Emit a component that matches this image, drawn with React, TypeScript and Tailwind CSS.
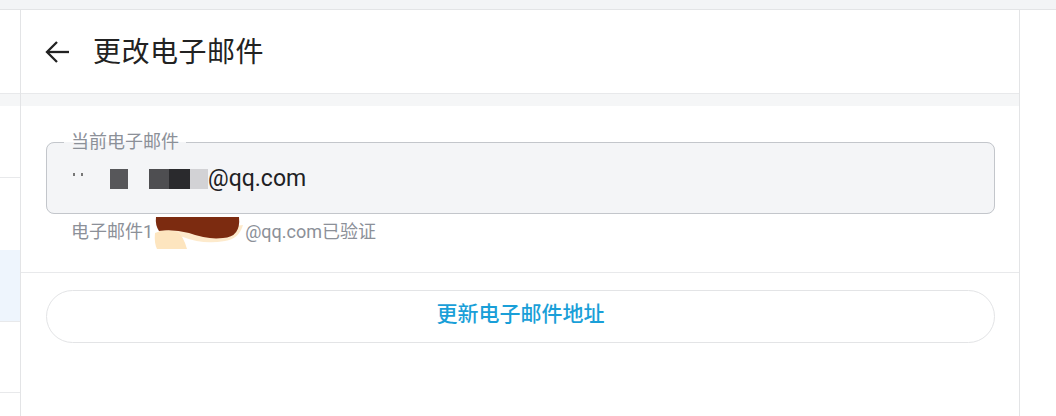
import React from "react";

const CJK = "font-['Roboto','Noto_Sans_CJK_SC',sans-serif]";

function LeftRail() {
  return (
    <div className="w-[21px] shrink-0 border-r border-[#e3e4e6] flex flex-col">
      <div className="h-[84px] border-b border-[#e8e9eb] bg-white" />
      <div className="h-[12px] bg-[#f5f6f7]" />
      <div className="h-[72px] border-b border-[#e8e9eb] bg-white" />
      <div className="h-[72px] bg-white" />
      <div className="h-[72px] border-b border-[#e8e9eb] bg-[#eef5fd]" />
      <div className="h-[71px] border-b border-[#e8e9eb] bg-white" />
      <div className="flex-1 bg-white" />
    </div>
  );
}

function Redaction() {
  return (
    <svg width="92" height="34" viewBox="0 0 92 34" className="shrink-0 -my-[8px]">
      <path d="M2 26 Q3 12 20 14 L40 16 L90 10 Q86 24 72 26 Q50 30 30 22 Q12 20 8 28 Z" fill="#fde8c6" opacity="0.9" />
      <path d="M3 2 L86 2 Q88 22 70 23 Q55 25 36 18 Q20 14 6 16 Q2 10 3 2 Z" fill="#7c2b10" />
      <path d="M2 18 Q10 14 24 17 Q30 20 34 34 L4 34 Q1 28 2 18 Z" fill="#fde5bf" />
    </svg>
  );
}

export default function App() {
  return (
    <div className={`w-[1056px] h-[416px] bg-white flex flex-col overflow-hidden ${CJK}`}>
      <div className="h-[10px] shrink-0 bg-[#f3f4f6] border-b border-[#e3e4e6]" />
      <div className="flex flex-1 min-h-0">
        <LeftRail />
        <div className="w-[999px] shrink-0 border-r border-[#e3e4e6] flex flex-col">
          <div className="h-[84px] shrink-0 border-b border-[#e8e9eb] flex items-center pl-[24px]">
            <svg width="24" height="24" viewBox="0 0 24 24" fill="none" stroke="#222" strokeWidth="2.3" strokeLinecap="square">
              <path d="M23 12H3" />
              <path d="M12 2L2 12l10 10" strokeLinecap="butt" />
            </svg>
            <span className="ml-[24px] text-[28px] tracking-[0.5px] leading-none text-[#222] font-['Noto_Sans_CJK_SC',sans-serif] pb-[3px]">
              更改电子邮件
            </span>
          </div>
          <div className="h-[12px] shrink-0 bg-[#f5f6f7]" />
          <div className="px-[25px] pr-[24px] pb-[30px] border-b border-[#e8e9eb]">
            <fieldset className="mt-[25px] border border-[#c3c6cb] rounded-[8px] bg-[#f4f5f7] px-[17px] m-0 min-w-0">
              <legend className="px-[7px] text-[18px] leading-[22px] text-[#8c9098]">当前电子邮件</legend>
              <div className="h-[60px] flex items-center pb-[8px] pl-[9px]">
                <span className="flex items-center">
                  <span className="w-[2px] h-[3px] bg-[#777] mr-[6px] -mt-[10px]" />
                  <span className="w-[2px] h-[3px] bg-[#777] mr-[27px] -mt-[10px]" />
                  <span className="w-[18px] h-[20px] bg-[#57575a] mr-[21px]" />
                  <span className="w-[20px] h-[20px] bg-[#4e4e51]" />
                  <span className="w-[21px] h-[20px] bg-[#2a2a2d]" />
                  <span className="w-[18px] h-[20px] bg-[#d2d2d5]" />
                </span>
                <span className="text-[23px] leading-[30px] text-[#202124] font-['Roboto',sans-serif]">@qq.com</span>
              </div>
            </fieldset>
            <div className="mt-[8px] pl-[25px] flex items-center h-[20px] text-[18px] leading-[20px] text-[#8c9098]">
              <span>电子邮件1</span>
              <Redaction />
              <span>@qq.com已验证</span>
            </div>
          </div>
          <div className="px-[25px] pr-[24px] mt-[17px]">
            <button className="w-full h-[53px] rounded-full border border-[#e3e4e6] bg-white flex items-center justify-center pb-[7px] text-[21px] font-medium text-[#1a9fd8] font-['Noto_Sans_CJK_SC',sans-serif]">
              更新电子邮件地址
            </button>
          </div>
        </div>
        <div className="flex-1 bg-white" />
      </div>
    </div>
  );
}
